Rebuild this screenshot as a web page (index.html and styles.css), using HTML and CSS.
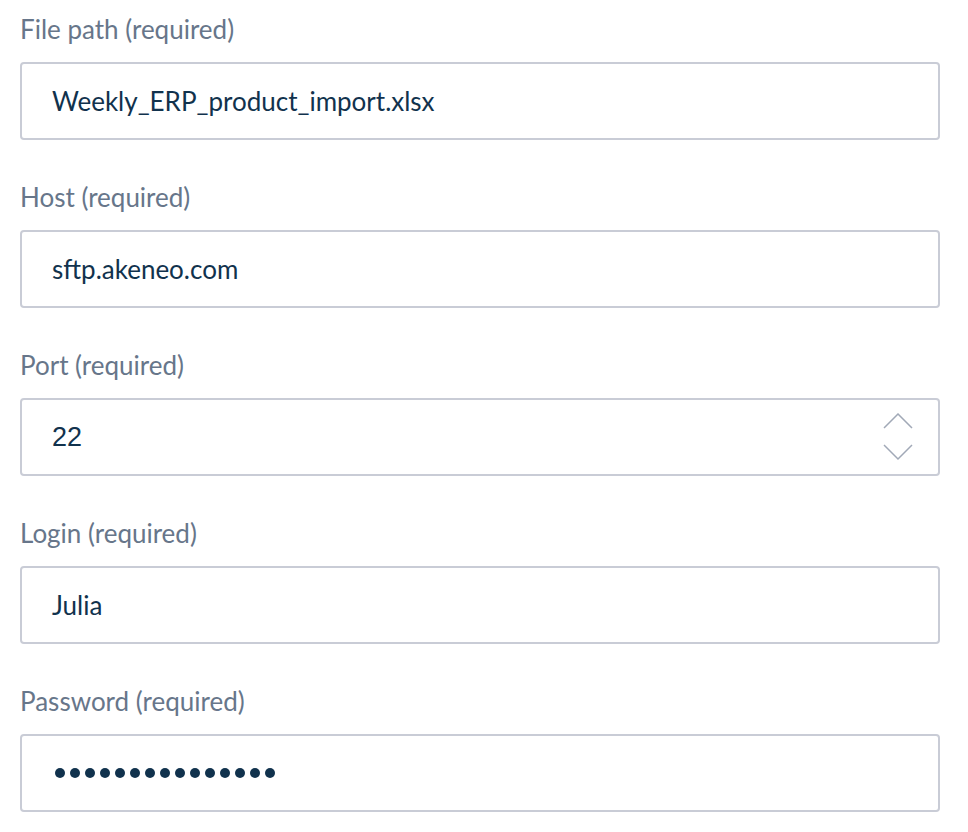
FILE: index.html
```html
<!DOCTYPE html>
<html>
<head>
<meta charset="utf-8">
<link rel="stylesheet" href="styles.css">
</head>
<body>
<form class="form">
  <div class="field">
    <label class="label">File path (required)</label>
    <div class="input"><span class="value">Weekly_ERP_product_import.xlsx</span></div>
  </div>
  <div class="field">
    <label class="label">Host (required)</label>
    <div class="input"><span class="value">sftp.akeneo.com</span></div>
  </div>
  <div class="field">
    <label class="label">Port (required)</label>
    <div class="input input-number">
      <span class="value value-number">22</span>
      <span class="spinner">
        <svg width="32" height="48" viewBox="0 0 32 48" fill="none" stroke="#a1a9b7" stroke-width="1.5">
          <path d="M2 15 L16 1 L30 15"/>
          <path d="M2 32 L16 46 L30 32"/>
        </svg>
      </span>
    </div>
  </div>
  <div class="field">
    <label class="label">Login (required)</label>
    <div class="input"><span class="value">Julia</span></div>
  </div>
  <div class="field">
    <label class="label">Password (required)</label>
    <div class="input"><span class="dots"><i></i><i></i><i></i><i></i><i></i><i></i><i></i><i></i><i></i><i></i><i></i><i></i><i></i><i></i><i></i></span></div>
  </div>
</form>
</body>
</html>
```
FILE: styles.css
```css
* { box-sizing: border-box; }
html, body { margin: 0; background: #fff; }
body { font-family: Lato, "Noto Sans", sans-serif; }
.form {
  padding: 13px 28px 0 20px;
  display: flex;
  flex-direction: column;
  gap: 41px;
}
.field { display: flex; flex-direction: column; gap: 17px; }
.label {
  font-size: 26px;
  line-height: 32px;
  color: #67768a;
}
.input {
  height: 78px;
  border: 2px solid #c9ccd6;
  border-radius: 4px;
  display: flex;
  align-items: center;
  padding: 0 24px 0 30px;
}
.value {
  font-size: 26px;
  color: #11324d;
}
.value-number {
  font-family: "Liberation Sans", Arial, sans-serif;
  font-size: 27px;
  flex: 1;
}
.spinner { display: flex; }
.dots { display: flex; gap: 5px; padding-left: 3px; }
.dots i {
  width: 10px; height: 10px;
  border-radius: 50%;
  background: #11324d;
}
```
